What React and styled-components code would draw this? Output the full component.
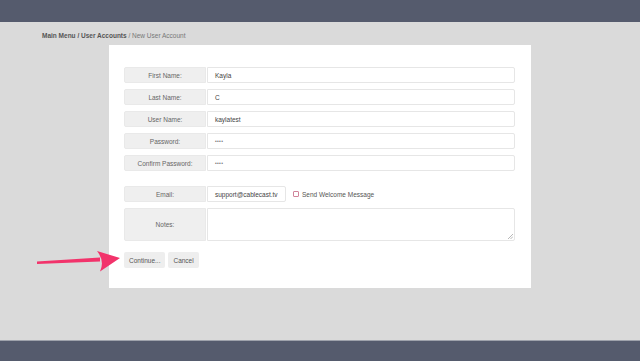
import React from 'react';
import styled, { createGlobalStyle } from 'styled-components';

const GlobalStyle = createGlobalStyle`
  html, body {
    margin: 0;
    padding: 0;
    background: #dadada;
    font-family: 'Liberation Sans', Arial, sans-serif;
  }
`;

const Page = styled.div`
  position: relative;
  height: 361px;
  display: flex;
  flex-direction: column;
  overflow: hidden;
`;

const TopBar = styled.div`
  height: 22px;
  background: #555b6d;
`;

const Main = styled.div`
  flex: 1;
  padding: 10px 0 0 42px;
`;

const Breadcrumb = styled.div`
  font-size: 6.5px;
  color: #777;
  height: 13px;
  line-height: 8px;

  b {
    color: #555;
    font-weight: 700;
  }
`;

const Panel = styled.div`
  margin-left: 67px;
  width: 391px;
  background: #fff;
  padding: 22px 16px 20px 15px;
  display: flex;
  flex-direction: column;
`;

const Row = styled.div`
  display: flex;
  align-items: stretch;
  height: ${p => p.$h || 16}px;
  margin-bottom: ${p => p.$gap ?? 6}px;
`;

const Label = styled.div`
  width: 82px;
  flex: none;
  box-sizing: border-box;
  background: #efefef;
  border: 1px solid #e9e9e9;
  border-radius: 2px 0 0 2px;
  display: flex;
  align-items: center;
  justify-content: center;
  font-size: 6.5px;
  color: #666;
`;

const Field = styled.div`
  flex: ${p => (p.$w ? 'none' : 1)};
  width: ${p => (p.$w ? `${p.$w}px` : 'auto')};
  margin-left: 1px;
  box-sizing: border-box;
  background: #fff;
  border: 1px solid #e6e6e6;
  border-radius: 0 2px 2px 0;
  padding: 0 7px;
  display: flex;
  align-items: center;
  font-size: ${p => (p.$secret ? '5px' : '6.5px')};
  letter-spacing: ${p => (p.$secret ? '0.3px' : 'normal')};
  color: ${p => (p.$secret ? '#777' : '#444')};
  position: relative;
`;

const Resize = styled.svg`
  position: absolute;
  right: 1px;
  bottom: 1px;
`;

const Check = styled.label`
  display: flex;
  align-items: center;
  margin-left: 7px;
  font-size: 6.5px;
  color: #555;
  gap: 3px;
`;

const Box = styled.span`
  width: 4px;
  height: 4px;
  border: 1px solid #d0849a;
  border-radius: 1px;
  background: #fff;
`;

const Buttons = styled.div`
  display: flex;
  gap: 3px;
  margin-top: 5px;
`;

const Button = styled.button`
  height: 16px;
  padding: 0 5px;
  border: none;
  border-radius: 2px;
  background: #eeeeee;
  color: #555;
  font-family: inherit;
  font-size: 6.5px;
`;

const Footer = styled.div`
  height: 20px;
  background: #555b6d;
  border-top: 1px solid #9ea2ab;
`;

const Arrow = styled.svg`
  position: absolute;
  left: 34px;
  top: 248px;
`;

const fields = [
  ['First Name:', 'Kayla'],
  ['Last Name:', 'C'],
  ['User Name:', 'kaylatest'],
  ['Password:', '\u2022\u2022\u2022\u2022', true],
  ['Confirm Password:', '\u2022\u2022\u2022\u2022', true],
];

export default function App() {
  return (
    <Page>
      <GlobalStyle />
      <TopBar />
      <Main>
        <Breadcrumb>
          <b>Main Menu / User Accounts</b> / New User Account
        </Breadcrumb>
        <Panel>
          {fields.map(([label, value, secret], i) => (
            <Row key={label} $gap={i === fields.length - 1 ? 15 : 6}>
              <Label>{label}</Label>
              <Field $secret={secret}>{value}</Field>
            </Row>
          ))}
          <Row>
            <Label>Email:</Label>
            <Field $w={79}>support@cablecast.tv</Field>
            <Check>
              <Box />
              Send Welcome Message
            </Check>
          </Row>
          <Row $h={33}>
            <Label>Notes:</Label>
            <Field>
              <Resize width="5" height="5" viewBox="0 0 5 5">
                <path d="M0 5L5 0M2.5 5L5 2.5" stroke="#999" strokeWidth="0.7" />
              </Resize>
            </Field>
          </Row>
          <Buttons>
            <Button>Continue...</Button>
            <Button>Cancel</Button>
          </Buttons>
        </Panel>
      </Main>
      <Footer />
      <Arrow width="90" height="26" viewBox="0 0 90 26">
        <path d="M3 13.5 L66 9.5 L66 13.5 L3 16 Z" fill="#f2336b" />
        <path d="M63 3 L86 10 L66 23.5 Q71 13 63 3 Z" fill="#f2336b" />
      </Arrow>
    </Page>
  );
}
